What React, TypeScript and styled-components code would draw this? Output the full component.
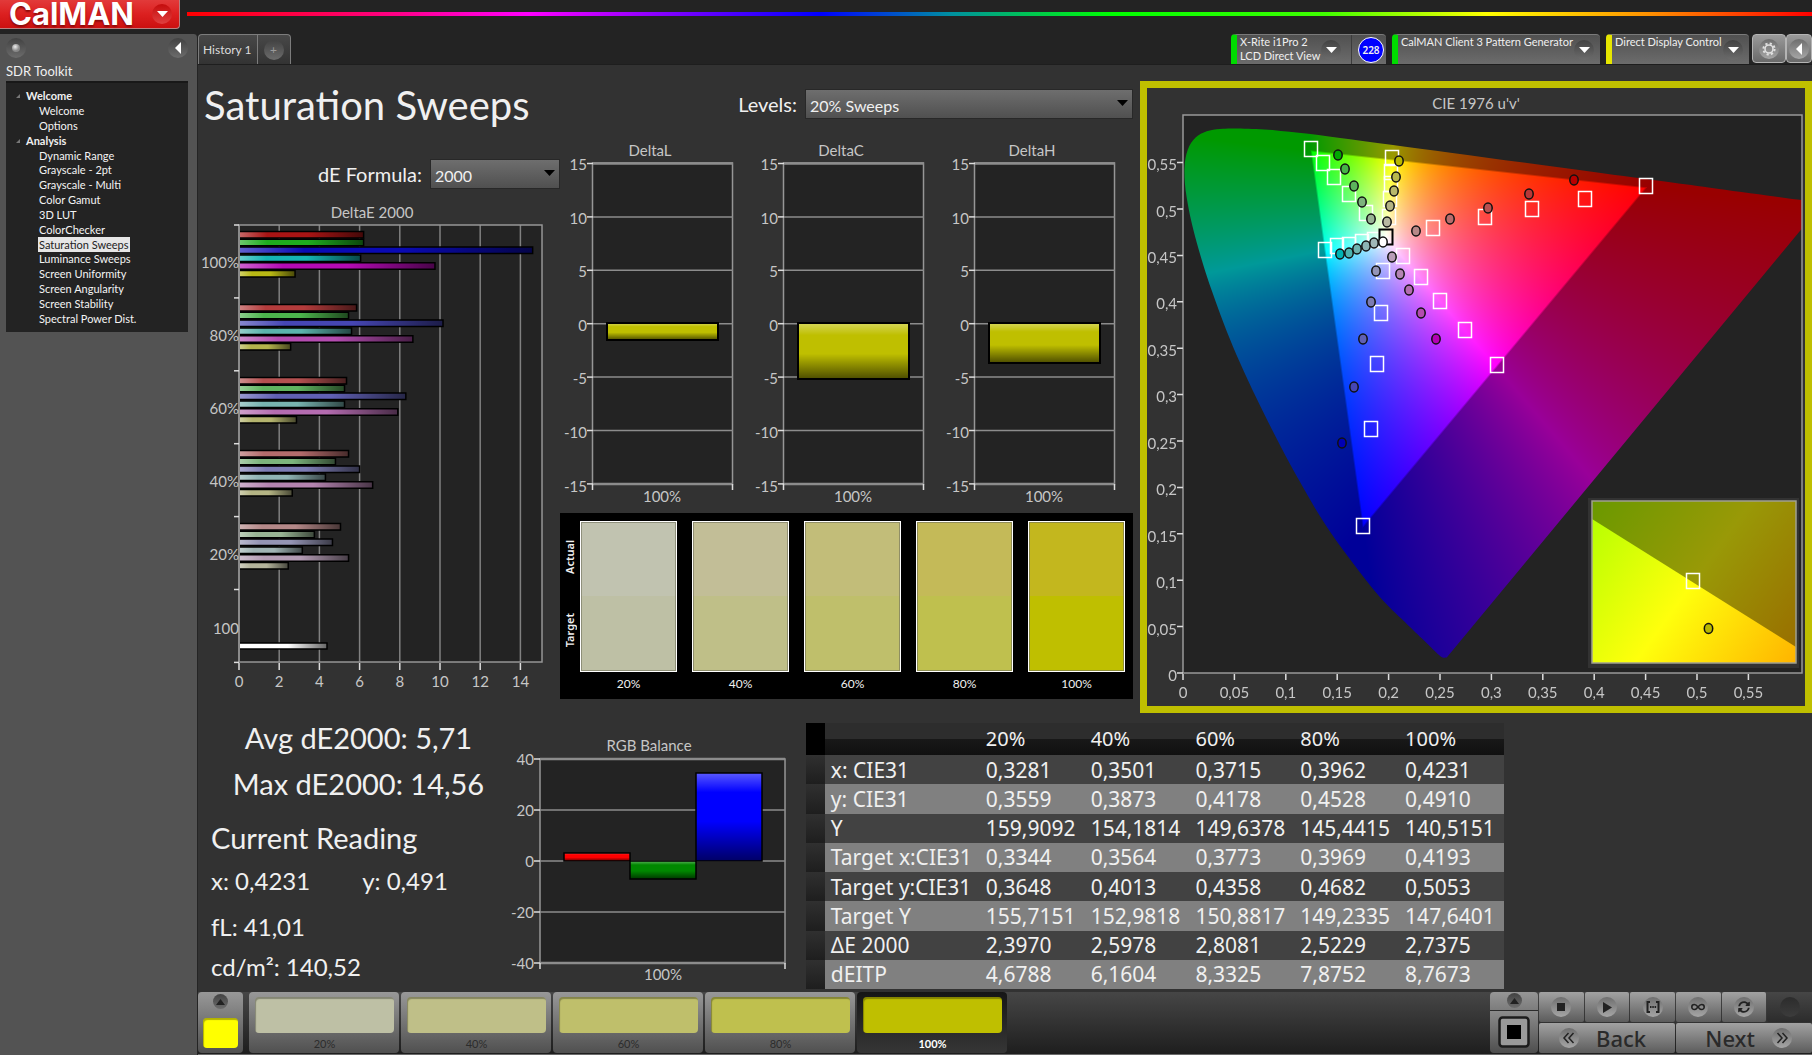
import React, { useEffect, useRef } from 'react';
import styled, { createGlobalStyle, css } from 'styled-components';
import { FaSyncAlt } from 'react-icons/fa';

const sans = `Lato, "Open Sans", "Liberation Sans", sans-serif`;
const wide = `"Noto Sans", "Open Sans", "Liberation Sans", sans-serif`;

const GlobalStyle = createGlobalStyle`
  *, *::before, *::after { box-sizing: border-box; }
  body { margin: 0; background: #232323; color: #f0f0f0; font-family: ${sans}; }
  button, select { font: inherit; color: inherit; border: 0; padding: 0; }
  button { cursor: pointer; }
  ul { list-style: none; margin: 0; padding: 0; }
  h1, h2, p { margin: 0; font-weight: 400; }
  svg { display: block; }
`;

/* ---------- shell ---------- */

const Page = styled.div`
  display: flex;
  flex-direction: column;
  min-height: 100vh;
`;

const TopBar = styled.header`
  display: flex;
  align-items: flex-start;
  gap: 7px;
  height: 34px;
`;

const LogoButton = styled.button`
  display: flex;
  align-items: center;
  justify-content: space-between;
  width: 180px;
  height: 29px;
  padding: 0 7px 0 9px;
  background: linear-gradient(#e23a3a, #dc2020 50%, #cc1010);
  border-right: 1px solid #b98080;
  border-bottom: 1px solid #b98080;
  border-radius: 0 0 4px 0;
  color: #fff;
`;

const LogoText = styled.span`
  font: 700 31px/28px Inter, ${wide};
  text-shadow: 0 2px 2px #8c0a0a;
`;

const Rainbow = styled.div`
  flex: 1;
  height: 4px;
  margin-top: 12px;
  background: linear-gradient(90deg, #ff0000 0%, #ff0088 13%, #ff00ff 21%, #8800ff 29%, #0000ff 39%, #0090a0 47%, #00ff00 57%, #40ff00 70%, #ffff00 80%, #ff9000 90%, #ff0000 100%);
`;

const Body = styled.div`
  display: flex;
  flex: 1;
`;

const Sidebar = styled.aside`
  flex: 0 0 198px;
  padding: 0 9px 0 6px;
  background: #535353;
  border-right: 1px solid #242424;
  border-radius: 0 4px 0 0;
`;

const SidebarHead = styled.div`
  display: flex;
  justify-content: space-between;
  align-items: center;
  height: 28px;
`;

const RoundIcon = styled.span<{ $size?: number; $light?: boolean }>`
  display: inline-flex;
  flex: none;
  align-items: center;
  justify-content: center;
  width: ${(p) => p.$size ?? 20}px;
  height: ${(p) => p.$size ?? 20}px;
  border-radius: 50%;
  background: ${(p) => (p.$light ? 'linear-gradient(#6e6e6e, #a6a6a6)' : 'linear-gradient(#424242, #6c6c6c)')};
`;

const RoundButton = styled(RoundIcon).attrs({ as: 'button' })``;

const LogoCaret = styled(RoundIcon)`
  background: linear-gradient(#c40c0c, #e04040);
`;

const WorkflowName = styled.h2`
  font-size: 13px;
  line-height: 19px;
`;

const TreePanel = styled.nav`
  height: 251px;
  padding: 6px 0 6px 9px;
  background: #232323;
  border-top: 2px solid #181818;
  font-size: 11px;
  line-height: 14px;
`;

const Tree = styled.ul`
  display: grid;
  grid-auto-rows: minmax(0, 1fr);
  height: 100%;
`;

const TreeItem = styled.li<{ $group?: boolean }>`
  display: flex;
  align-items: center;
  gap: 6px;
  padding-left: ${(p) => (p.$group ? 1 : 23)}px;
  font-weight: ${(p) => (p.$group ? 700 : 400)};
`;

const TreeButton = styled.button<{ $active?: boolean }>`
  height: 15px;
  padding: 0 1px;
  background: ${(p) => (p.$active ? '#e6e6e6' : 'none')};
  color: ${(p) => (p.$active ? '#222' : '#f4f4f4')};
`;

const Main = styled.main`
  display: flex;
  flex: 1;
  min-width: 0;
  flex-direction: column;
`;

/* ---------- tab strip ---------- */

const Strip = styled.div`
  display: flex;
  justify-content: space-between;
  height: 30px;
`;

const Tabs = styled.div`
  display: flex;
  border: 1px solid #7c7c7c;
  border-bottom: 0;
  border-radius: 4px 4px 0 0;
  background: linear-gradient(#484848, #333);
`;

const Tab = styled.button`
  padding: 0 5px 0 4px;
  background: none;
  font-size: 12px;
  color: #dcdcdc;

  & + & {
    padding: 0 6px;
    border-left: 1px solid #7c7c7c;
    color: #9a9a9a;
  }
`;

const Devices = styled.div`
  display: flex;
  gap: 6px;
`;

const Device = styled.div<{ $color: string; $width: number }>`
  display: flex;
  width: ${(p) => p.$width}px;
  padding-left: 3px;
  background: linear-gradient(#505050, #6c6c6c);
  border-top: 1px solid #7a7a7a;
  border-left: 6px solid ${(p) => p.$color};
  border-radius: 4px 4px 0 0;
`;

const DeviceButton = styled.button<{ $end?: number }>`
  display: flex;
  flex: 1;
  align-items: flex-start;
  justify-content: space-between;
  padding-right: ${(p) => p.$end ?? 6}px;
  background: none;
  font-size: 11px;
  line-height: 14px;
  text-align: left;
  white-space: nowrap;
`;

const DeviceCaret = styled(RoundIcon)`
  margin-top: 5px;
`;

const Badge = styled.span`
  align-self: center;
  width: 26px;
  height: 26px;
  margin: 0 2px 0 6px;
  border: 1px solid #fff;
  border-radius: 50%;
  background: #0000ff;
  font: 600 10px/24px ${wide};
  text-align: center;
`;

const BadgeSlot = styled.span`
  display: flex;
  border-left: 1px solid #3c3c3c;
`;

const ToolButtons = styled.div`
  display: flex;
  height: 29px;
  margin-left: -3px;
`;

const ToolButton = styled.button<{ $width: number }>`
  display: flex;
  align-items: center;
  justify-content: center;
  width: ${(p) => p.$width}px;
  background: linear-gradient(#9a9a9a, #6a6a6a);
  border: 1px solid #b4b4b4;
  border-radius: 4px;
`;

/* ---------- dashboard ---------- */

const Dashboard = styled.div`
  flex: 1;
  background: #323232;
  border-top: 1px solid #1e1e1e;
`;

const Upper = styled.div`
  display: grid;
  grid-template-columns: 362fr 580fr 672fr;
  align-items: start;
  padding-top: 16px;
`;

const LeftColumn = styled.section`
  display: flex;
  flex-direction: column;
`;

const MiddleColumn = styled.section`
  padding-right: 7px;
`;

const Title = styled.h1`
  padding-left: 6px;
  font-size: 40px;
  line-height: 48px;
`;

const Field = styled.div<{ $top: number; $bottom: number }>`
  display: flex;
  align-items: center;
  justify-content: flex-end;
  gap: 8px;
  margin: ${(p) => `${p.$top}px 0 ${p.$bottom}px`};
  font-size: 20px;
`;

const SelectBox = styled.div<{ $width: number }>`
  position: relative;
  width: ${(p) => p.$width}px;
  height: 30px;

  select {
    width: 100%;
    height: 100%;
    padding: 3px 24px 0 4px;
    appearance: none;
    background: linear-gradient(#6e6e6e, #505050);
    border: 1px solid #282828;
    font-size: 16px;
  }

  svg {
    position: absolute;
    top: 11px;
    right: 5px;
    pointer-events: none;
  }
`;

const Chart = styled.svg`
  width: 100%;
  height: auto;
  overflow: visible;

  text {
    font-family: ${sans};
    font-size: 15px;
    fill: #c6c6c6;
  }
`;

const DeltaRow = styled.div`
  display: grid;
  grid-template-columns: repeat(3, 1fr);
`;

const Swatches = styled.div`
  display: flex;
  padding: 8px 8px 3px 0;
  background: #000;
`;

const SwatchAxis = styled.div`
  display: flex;
  flex-direction: column;
  justify-content: space-around;
  align-items: center;
  width: 20px;
  height: 145px;

  span {
    writing-mode: vertical-rl;
    transform: rotate(180deg);
    font: 600 11px/14px ${wide};
  }
`;

const SwatchList = styled.div`
  display: grid;
  flex: 1;
  grid-template-columns: repeat(5, 1fr);
  column-gap: 15px;
`;

const Swatch = styled.figure`
  margin: 0;
  text-align: center;

  figcaption {
    font-size: 12px;
    line-height: 24px;
  }
`;

const SwatchColor = styled.div<{ $actual: string; $target: string }>`
  height: 151px;
  border: 1px solid #fff;
  box-shadow: inset 0 0 0 1px rgba(110, 110, 90, 0.6);
  background: linear-gradient(${(p) => p.$actual} 50%, ${(p) => p.$target} 50%);
`;

const CiePanel = styled.section`
  border: 7px solid #bfbf00;

  canvas {
    display: block;
    width: 100%;
    height: 100%;
  }
`;

const Lower = styled.div`
  display: grid;
  grid-template-columns: 308fr 300fr 698fr 308fr;
  align-items: start;
  margin-top: 2px;
`;

const Readings = styled.section`
  padding-left: 13px;
`;

const BigLine = styled.p<{ $center?: boolean }>`
  font-size: 29px;
  line-height: 46px;
  text-align: ${(p) => (p.$center ? 'center' : 'left')};
  margin-top: ${(p) => (p.$center ? 0 : 8)}px;
`;

const ReadingLine = styled.p<{ $gap?: boolean }>`
  display: flex;
  gap: 52px;
  margin-top: ${(p) => (p.$gap ? 6 : 0)}px;
  font-size: 24px;
  line-height: 40px;
`;

const ChartCell = styled.section`
  margin-top: 15px;
  padding-right: 5px;
`;

const DataTable = styled.table`
  width: 100%;
  height: 266px;
  margin-top: 8px;
  border-collapse: collapse;
  table-layout: fixed;
  font: 400 21px/24px ${wide};

  th, td {
    padding: 0 0 0 6px;
    font-weight: 400;
    text-align: left;
    white-space: nowrap;
  }
  thead th {
    height: 32px;
    font-size: 20px;
    background: linear-gradient(#2d2d2d 50%, #181818 50%, #101010);
  }
  thead th:first-child { background: #000; }
  tbody tr { background: #424242; }
  tbody tr:nth-child(even) { background: #808080; }
  tbody td:first-child { background: linear-gradient(#303030, #1e1e1e); }
`;

/* ---------- bottom bar ---------- */

const BottomBar = styled.footer`
  display: flex;
  justify-content: space-between;
  height: 63px;
  padding: 0 0 1px;
  background: linear-gradient(#464646, #1e1e1e);
  border-bottom: 1px solid #6a6a6a;
`;

const PatternGroup = styled.div`
  display: flex;
  gap: 2px;
`;

const PatternButton = styled.button<{ $active?: boolean }>`
  display: flex;
  flex-direction: column;
  justify-content: space-between;
  width: 150px;
  padding: 5px 5px 2px 6px;
  border-radius: 4px;
  font-size: 11px;
  line-height: 14px;
  text-align: center;
  ${(p) =>
    p.$active
      ? css`background: linear-gradient(#161616, #363636); color: #fff; font-weight: 700;`
      : css`background: linear-gradient(#989898, #505050); color: #2c2c2c;`}
`;

const PatternColor = styled.span<{ $color: string; $height: number }>`
  display: block;
  width: 100%;
  height: ${(p) => p.$height}px;
  border-radius: 4px;
  background: ${(p) => p.$color};
  box-shadow: inset 1px 2px 1px rgba(0, 0, 0, 0.3);
`;

const PatternLabel = styled.span`
  width: 100%;
`;

const CurrentPattern = styled.button`
  display: flex;
  flex-direction: column;
  align-items: center;
  justify-content: space-between;
  width: 45px;
  margin-right: 4px;
  padding: 2px 5px 5px;
  background: linear-gradient(#989898, #505050);
  border-radius: 4px;
`;

const Transport = styled.div`
  display: flex;
  gap: 1px;
`;

const WindowButton = styled.button`
  display: flex;
  flex-direction: column;
  align-items: center;
  justify-content: space-between;
  width: 48px;
  padding: 1px 0 5px;
  border-radius: 4px;
  background: linear-gradient(#969696, #7c7c7c 18px, #2c2c2c 18px, #2c2c2c 19px, #8c8c8c 19px, #4e4e4e);
`;

const TransportGrid = styled.div`
  display: grid;
  width: 273px;
  grid-template-columns: repeat(6, 1fr);
  grid-template-rows: 30px 30px;
  gap: 1px;
`;

const TransportButton = styled.button<{ $off?: boolean }>`
  display: flex;
  align-items: center;
  justify-content: center;
  border-radius: 2px;
  background: ${(p) => (p.$off ? 'linear-gradient(#464646, #2c2c2c)' : 'linear-gradient(#a2a2a2, #5c5c5c)')};
  color: #222;
`;

const StepButton = styled(TransportButton)<{ $side: 'start' | 'end' }>`
  grid-column: span 3;
  gap: 17px;
  justify-content: flex-${(p) => p.$side};
  padding: 0 20px;
  color: #2a2a2a;
  font: 500 22px/28px ${wide};
`;

const DimIcon = styled(RoundIcon)`
  background: linear-gradient(#2c2c2c, #3c3c3c);
`;

/* ---------- small glyphs ---------- */

const Caret = ({ color = '#fff' }: { color?: string }) => (
  <svg width="11" height="6" viewBox="0 0 11 6"><path d="M0 0h11L5.5 6z" fill={color} /></svg>
);
const CaretLeft = () => (
  <svg width="6" height="12" viewBox="0 0 6 12"><path d="M6 0v12L0 6z" fill="#fff" /></svg>
);
const CaretUp = () => (
  <svg width="9" height="6" viewBox="0 0 9 6"><path d="M0 6h9L4.5 0z" fill="#222" /></svg>
);

/* ---------- CIE diagram ---------- */

type Pt = [number, number];

const locusXy: Pt[] = [
  [0.1741, 0.005], [0.1714, 0.0051], [0.1689, 0.0069], [0.1644, 0.0109], [0.1566, 0.0177],
  [0.144, 0.0297], [0.1241, 0.0578], [0.1096, 0.0868], [0.0913, 0.1327], [0.0687, 0.2007],
  [0.0454, 0.295], [0.0235, 0.4127], [0.0082, 0.5384], [0.0039, 0.6548], [0.0139, 0.7502],
  [0.0389, 0.812], [0.0743, 0.8338], [0.1142, 0.8262], [0.1547, 0.8059], [0.2296, 0.7543],
  [0.3016, 0.6923], [0.3731, 0.6245], [0.4441, 0.5547], [0.5125, 0.4866], [0.5752, 0.4242],
  [0.627, 0.3725], [0.6658, 0.334], [0.6915, 0.3083], [0.719, 0.2809], [0.7347, 0.2653],
];
const toUv = ([x, y]: Pt): Pt => {
  const d = -2 * x + 12 * y + 3;
  return [(4 * x) / d, (9 * y) / d];
};
const gamut: Pt[] = [[0.4507, 0.5229], [0.125, 0.5625], [0.1754, 0.1579]];

const plot = { su: 1027, sv: 928, w: 619, h: 558 };

function paintGamut(canvas: HTMLCanvasElement) {
  const { su, sv, w, h } = plot;
  const ctx = canvas.getContext('2d');
  if (!ctx) return;
  const img = ctx.createImageData(w, h);
  const px = ([u, v]: Pt): Pt => [u * su, h - v * sv];
  const tri = gamut.map(px);
  const tone = (c: number) => Math.pow(Math.max(0, c), 0.88);
  for (let j = 0; j < h; j++) {
    for (let i = 0; i < w; i++) {
      const u = (i + 0.5) / su;
      const v = (h - j - 0.5) / sv;
      const X = (9 * u) / (4 * v);
      const Z = (12 - 3 * u - 20 * v) / (4 * v);
      const r = tone(3.2406 * X - 1.5372 - 0.4986 * Z);
      const g = tone(-0.9689 * X + 1.8758 + 0.0415 * Z);
      const b = tone(0.0557 * X - 0.204 + 1.057 * Z);
      const m = Math.max(r, g, b, 1e-6);
      let dist = Infinity;
      for (let k = 0; k < 3; k++) {
        const [ax, ay] = tri[k];
        const [bx, by] = tri[(k + 1) % 3];
        const len = Math.hypot(bx - ax, by - ay);
        const d = ((i + 0.5 - ax) * (by - ay) - (j + 0.5 - ay) * (bx - ax)) / len;
        dist = Math.min(dist, d);
      }
      // full brightness inside the target gamut, dimmed outside it
      const k = 0.6 + 0.4 * Math.min(1, Math.max(0, dist / 2 + 0.5));
      const o = (j * w + i) * 4;
      img.data[o] = (r / m) * 255 * k;
      img.data[o + 1] = (g / m) * 255 * k;
      img.data[o + 2] = (b / m) * 255 * k;
      img.data[o + 3] = 255;
    }
  }
  ctx.putImageData(img, 0, 0);
  // keep only the area under the spectral locus
  const pts = locusXy.map((p) => px(toUv(p)));
  ctx.globalCompositeOperation = 'destination-in';
  ctx.beginPath();
  ctx.moveTo(pts[0][0], pts[0][1]);
  for (let i = 0; i < pts.length - 1; i++) {
    const a = pts[Math.max(0, i - 1)], b = pts[i], c = pts[i + 1], d = pts[Math.min(pts.length - 1, i + 2)];
    ctx.bezierCurveTo(b[0] + (c[0] - a[0]) / 6, b[1] + (c[1] - a[1]) / 6, c[0] - (d[0] - b[0]) / 6, c[1] - (d[1] - b[1]) / 6, c[0], c[1]);
  }
  ctx.closePath();
  ctx.fill();
  ctx.globalCompositeOperation = 'source-over';
}

const GamutCanvas = () => {
  const ref = useRef<HTMLCanvasElement>(null);
  useEffect(() => {
    if (ref.current) paintGamut(ref.current);
  }, []);
  return <canvas ref={ref} width={plot.w} height={plot.h} />;
};

const targets: Pt[] = [
  [128, 34], [140, 48], [151, 62], [166, 79], [183, 98],
  [209, 43], [208, 57], [208, 69], [207, 84], [206, 102],
  [142, 135], [154, 131], [166, 130], [179, 127], [191, 125],
  [250, 113], [302, 102], [349, 94], [402, 84], [463, 71],
  [220, 141], [238, 162], [257, 186], [282, 215], [314, 250],
  [200, 156], [198, 198], [194, 249], [188, 314], [180, 411],
];
const measured: [number, number, string][] = [
  [155, 40, '#00a800'], [162, 54, '#46b446'], [171, 71, '#5cb45c'], [179, 87, '#7cb47c'], [188, 104, '#98b494'],
  [216, 46, '#b8b800'], [213, 62, '#b8b84c'], [211, 76, '#b8b86c'], [207, 91, '#b4b484'], [204, 107, '#b8b8a0'],
  [157, 139, '#00b4b4'], [166, 138, '#4cb4b0'], [174, 134, '#70b4b0'], [183, 131, '#8cb4b4'], [191, 128, '#a0b8b8'],
  [200, 127, '#ffffff'],
  [233, 116, '#b88888'], [267, 104, '#b86c6c'], [305, 93, '#b85050'], [346, 79, '#b83838'], [391, 65, '#b80000'],
  [209, 142, '#b89cb8'], [217, 159, '#b484b4'], [226, 175, '#b46cb0'], [238, 198, '#b44cb0'], [253, 224, '#b400b4'],
  [193, 156, '#9494b8'], [188, 187, '#7c7cb4'], [180, 224, '#6060b4'], [171, 272, '#4646b4'], [159, 328, '#0000b4'],
];

const decimal = (n: number) => String(n).replace('.', ',');

const CieChart = () => {
  const ticks = Array.from({ length: 12 }, (_, i) => Math.round(i * 5) / 100);
  return (
    <CiePanel>
      <Chart viewBox="0 0 658 618" role="img" aria-label="CIE 1976 u'v'">
        <defs>
          <linearGradient id="inset" gradientUnits="userSpaceOnUse" x1="0" y1="0" x2="210" y2="152">
            <stop offset="0" stopColor="#b1ff00" />
            <stop offset="0.5" stopColor="#ffff0c" />
            <stop offset="1" stopColor="#ffb400" />
          </linearGradient>
        </defs>
        <text x="329" y="21" textAnchor="middle">CIE 1976 u'v'</text>
        <rect x="36" y="27" width="619" height="558" fill="#232323" />
        <foreignObject x="36" y="27" width="619" height="558"><GamutCanvas /></foreignObject>
        <rect x="36" y="27" width="619" height="558" fill="none" stroke="#999" strokeWidth="1.5" />
        {ticks.map((t) => (
          <g key={t}>
            <path d={`M${36 + t * 1028} 586v6M30 ${585 - t * 928}h6`} stroke="#ddd" strokeWidth="1.5" />
            <text x={36 + t * 1028} y="610" textAnchor="middle">{decimal(t)}</text>
            <text x="30" y={593 - t * 929} textAnchor="end">{decimal(t)}</text>
          </g>
        ))}
        <g transform="translate(36 27)" fill="none" strokeWidth="1.5">
          {targets.map(([x, y], i) => <rect key={i} x={x - 6.5} y={y - 7.5} width="13" height="15" stroke="#fff" />)}
          <rect x="196.5" y="114.5" width="13" height="15" stroke="#000" strokeWidth="2" />
          {measured.map(([x, y, c], i) => <ellipse key={i} cx={x} cy={y} rx="4.2" ry="5" fill={c} stroke="#111" />)}
        </g>
        <rect x="441" y="410" width="211" height="170" fill="#323232" />
        <g transform="translate(445 413)">
          <rect width="204" height="162" fill="url(#inset)" />
          <path d="M0 0h204v146L0 18z" fill="#000" fillOpacity="0.4" />
          <rect width="204" height="162" fill="none" stroke="#a0a090" strokeWidth="1.5" />
          <rect x="94.5" y="72.500" width="13" height="15" fill="none" stroke="#fff" strokeWidth="1.5" />
          <ellipse cx="116.5" cy="127.5" rx="4.2" ry="5" fill="#b8b800" stroke="#111" strokeWidth="1.5" />
        </g>
      </Chart>
    </CiePanel>
  );
};

/* ---------- bar charts ---------- */

const Sheen = ({ id, vertical }: { id: string; vertical?: boolean }) => (
  <linearGradient id={id} x1="0" y1="0" x2={vertical ? 0 : 1} y2={vertical ? 1 : 0}>
    <stop offset="0" stopColor="#fff" stopOpacity="0.35" />
    <stop offset="0.22" stopColor="#fff" stopOpacity="0" />
    <stop offset="0.55" stopColor="#000" stopOpacity="0" />
    <stop offset="1" stopColor="#000" stopOpacity="0.6" />
  </linearGradient>
);

const deGroups = [
  { label: '100%', values: [6.15, 6.15, 14.56, 6.0, 9.7, 2.74], colors: ['#a81414', '#1eac1e', '#0a0ab4', '#14b4b4', '#b40ab4', '#b8b814'] },
  { label: '80%', values: [5.8, 5.4, 10.1, 5.55, 8.6, 2.52], colors: ['#b43c3c', '#4cb44c', '#4646b4', '#5ab4ac', '#b44cb0', '#b4b44c'] },
  { label: '60%', values: [5.3, 5.2, 8.25, 5.2, 7.85, 2.81], colors: ['#b45050', '#60b460', '#6060b4', '#78b4b0', '#b46cb0', '#b4b46e'] },
  { label: '40%', values: [5.4, 4.75, 5.95, 4.25, 6.6, 2.6], colors: ['#b46c6c', '#7cb47c', '#7c7cb4', '#90b4b4', '#b484b0', '#b4b484'] },
  { label: '20%', values: [5.0, 3.7, 4.6, 3.1, 5.4, 2.4], colors: ['#b48888', '#98b494', '#9494b4', '#a0b4b4', '#b49cb4', '#b4b49c'] },
];

const DeltaEChart = () => (
  <Chart viewBox="0 0 362 500" role="img" aria-label="DeltaE 2000">
    <defs><Sheen id="sheen-h" /></defs>
    <text x="174" y="18" textAnchor="middle">DeltaE 2000</text>
    <rect x="41" y="25" width="303" height="437" fill="#232323" />
    {[0, 2, 4, 6, 8, 10, 12, 14].map((n) => (
      <g key={n}>
        <path d={`M${41 + n * 20.1} 25v437`} stroke="#808080" strokeWidth="1.5" />
        <path d={`M${41 + n * 20.1} 463v7`} stroke="#ddd" strokeWidth="1.5" />
        <text x={41 + n * 20.1} y="487" textAnchor="middle">{n}</text>
      </g>
    ))}
    <rect x="41" y="25" width="303" height="437" fill="none" stroke="#969696" strokeWidth="1.5" />
    {[0, 1, 2, 3, 4, 5, 6].map((n) => (
      <path key={n} d={`M36 ${25 + n * 72.9}h5`} stroke="#ddd" strokeWidth="1.5" />
    ))}
    {deGroups.map((g, gi) => (
      <g key={g.label}>
        <text x="41" y={68 + gi * 73} textAnchor="end">{g.label}</text>
        {g.values.map((v, i) => {
          const box = { x: 42, y: 31.5 + gi * 73 + i * 7.8, width: v * 20.1, height: 6.5 };
          return (
            <g key={i}>
              <rect {...box} fill={g.colors[i]} />
              <rect {...box} fill="url(#sheen-h)" />
              <path d={`M42 ${box.y}h${box.width}v${box.height}H42`} fill="none" stroke="#000" strokeWidth="1.5" />
            </g>
          );
        })}
      </g>
    ))}
    <text x="41" y="434" textAnchor="end">100</text>
    <rect x="42" y="443" width="87" height="6" fill="#fff" />
    <rect x="42" y="443" width="87" height="6" fill="url(#sheen-h)" />
    <path d="M42 443h87v6H42" fill="none" stroke="#000" strokeWidth="1.5" />
  </Chart>
);

const DeltaChart = ({ name, value }: { name: string; value: number }) => {
  const id = `sheen-${name}`;
  const zero = 183;
  return (
    <Chart viewBox="0 0 191 373" role="img" aria-label={name}>
      <defs><Sheen id={id} vertical /></defs>
      <text x="90" y="16" textAnchor="middle">{name}</text>
      <rect x="32.5" y="23" width="140" height="321" fill="#232323" stroke="#969696" strokeWidth="1.5" />
      {[15, 10, 5, 0, -5, -10, -15].map((n, i) => (
        <g key={n}>
          <path d={`M32 ${23.5 + i * 53.4}h141`} stroke="#8c8c8c" strokeWidth={i % 6 ? 1.5 : 2.5} />
          <path d={`M27 ${23.5 + i * 53.4}h6`} stroke="#ddd" strokeWidth="1.5" />
          <text x="27" y={30 + i * 53.6} textAnchor="end">{n}</text>
        </g>
      ))}
      <path d="M32.5 344v6M172.5 344v6" stroke="#ddd" strokeWidth="1.5" />
      <rect x="47" y={zero} width="111" height={value} fill="#bfbf00" />
      <rect x="47" y={zero} width="111" height={value} fill={`url(#${id})`} stroke="#000" strokeWidth="2" />
      <text x="102" y="362" textAnchor="middle">100%</text>
    </Chart>
  );
};

const RgbChart = () => (
  <Chart viewBox="0 0 295 260" role="img" aria-label="RGB Balance">
    <defs><Sheen id="sheen-rgb" vertical /></defs>
    <text x="143" y="21" textAnchor="middle">RGB Balance</text>
    <rect x="34" y="29" width="245" height="204" fill="#232323" stroke="#969696" strokeWidth="1.5" />
    {[40, 20, 0, -20, -40].map((n, i) => (
      <g key={n}>
        <path d={`M34 ${29 + i * 51}h245`} stroke="#8c8c8c" strokeWidth={i % 4 ? 1.5 : 2.5} />
        <path d={`M28 ${29 + i * 51}h6`} stroke="#ddd" strokeWidth="1.5" />
        <text x="28" y={35 + i * 51} textAnchor="end">{n}</text>
      </g>
    ))}
    <path d="M34 233v6M279 233v6" stroke="#ddd" strokeWidth="1.5" />
    {[
      { x: 58, y: 123, h: 8, c: '#ff0000' },
      { x: 124, y: 131, h: 18, c: '#008800' },
      { x: 190, y: 43, h: 88, c: '#0000ff' },
    ].map((b) => (
      <g key={b.c}>
        <rect x={b.x} y={b.y} width="66" height={b.h} fill={b.c} />
        <rect x={b.x} y={b.y} width="66" height={b.h} fill="url(#sheen-rgb)" stroke="#000" strokeWidth="1.5" />
      </g>
    ))}
    <text x="157" y="250" textAnchor="middle">100%</text>
  </Chart>
);

/* ---------- data ---------- */

const tree: { name: string; items: string[] }[] = [
  { name: 'Welcome', items: ['Welcome', 'Options'] },
  {
    name: 'Analysis',
    items: ['Dynamic Range', 'Grayscale - 2pt', 'Grayscale - Multi', 'Color Gamut', '3D LUT', 'ColorChecker',
      'Saturation Sweeps', 'Luminance Sweeps', 'Screen Uniformity', 'Screen Angularity', 'Screen Stability', 'Spectral Power Dist.'],
  },
];

const levels = [
  { label: '20%', actual: '#c1c3b0', target: '#bec0a5' },
  { label: '40%', actual: '#c2be97', target: '#bfbf88' },
  { label: '60%', actual: '#c2bd79', target: '#bfbf6b' },
  { label: '80%', actual: '#c4ba58', target: '#bfc04e' },
  { label: '100%', actual: '#c3b71e', target: '#bfbf00' },
];

const rows: string[][] = [
  ['x: CIE31', '0,3281', '0,3501', '0,3715', '0,3962', '0,4231'],
  ['y: CIE31', '0,3559', '0,3873', '0,4178', '0,4528', '0,4910'],
  ['Y', '159,9092', '154,1814', '149,6378', '145,4415', '140,5151'],
  ['Target x:CIE31', '0,3344', '0,3564', '0,3773', '0,3969', '0,4193'],
  ['Target y:CIE31', '0,3648', '0,4013', '0,4358', '0,4682', '0,5053'],
  ['Target Y', '155,7151', '152,9818', '150,8817', '149,2335', '147,6401'],
  ['ΔE 2000', '2,3970', '2,5978', '2,8081', '2,5229', '2,7375'],
  ['dEITP', '4,6788', '6,1604', '8,3325', '7,8752', '8,7673'],
];

const Glyph = ({ children }: { children: React.ReactNode }) => (
  <svg width="16" height="16" viewBox="0 0 16 16">{children}</svg>
);

const transportIcons: { name: string; icon: React.ReactNode }[] = [
  { name: 'Stop', icon: <Glyph><rect x="4" y="4" width="8" height="8" fill="#222" /></Glyph> },
  { name: 'Play', icon: <Glyph><path d="M4 3l9 5.5L4 14z" fill="#222" /></Glyph> },
  {
    name: 'Read range',
    icon: <Glyph><path d="M5 3H2.5v10H5M11 3h2.5v10H11M5 8h1.5M7.3 8h1.5M9.6 8h1.5" fill="none" stroke="#222" strokeWidth="2" /></Glyph>,
  },
  {
    name: 'Continuous',
    icon: (
      <Glyph>
        <path d="M8 8C6.5 6 5.5 5.5 4.3 5.5a2.5 2.5 0 0 0 0 5C5.5 10.5 6.5 10 8 8s2.5-2.5 3.7-2.5a2.5 2.5 0 0 1 0 5C10.5 10.5 9.5 10 8 8z" fill="none" stroke="#222" strokeWidth="1.6" />
      </Glyph>
    ),
  },
  { name: 'Refresh', icon: <FaSyncAlt size={12} /> },
];

/* ---------- app ---------- */

export default function App() {
  return (
    <Page>
      <GlobalStyle />
      <TopBar>
        <LogoButton>
          <LogoText>CalMAN</LogoText>
          <LogoCaret><Caret /></LogoCaret>
        </LogoButton>
        <Rainbow />
      </TopBar>
      <Body>
        <Sidebar>
          <SidebarHead>
            <RoundButton aria-label="Workflow status">
              <svg width="10" height="10" viewBox="0 0 10 10">
                <defs><radialGradient id="bead" cx=".4" cy=".35"><stop offset="0" stopColor="#eee" /><stop offset="1" stopColor="#888" /></radialGradient></defs>
                <circle cx="5" cy="5" r="4" fill="url(#bead)" />
              </svg>
            </RoundButton>
            <RoundButton aria-label="Collapse sidebar"><CaretLeft /></RoundButton>
          </SidebarHead>
          <WorkflowName>SDR Toolkit</WorkflowName>
          <TreePanel>
            <Tree>
              {tree.map((g) => (
                <React.Fragment key={g.name}>
                  <TreeItem $group>
                    <svg width="4" height="4" viewBox="0 0 4 4"><path d="M4 0v4H0z" fill="#777" /></svg>
                    {g.name}
                  </TreeItem>
                  {g.items.map((t) => (
                    <TreeItem key={t}><TreeButton $active={t === 'Saturation Sweeps'}>{t}</TreeButton></TreeItem>
                  ))}
                </React.Fragment>
              ))}
            </Tree>
          </TreePanel>
        </Sidebar>
        <Main>
          <Strip>
            <Tabs>
              <Tab>History 1</Tab>
              <Tab aria-label="New history tab"><RoundIcon>+</RoundIcon></Tab>
            </Tabs>
            <Devices>
              <Device $color="#00dc00" $width={155}>
                <DeviceButton $end={10}>
                  <span>X-Rite i1Pro 2<br />LCD Direct View</span>
                  <DeviceCaret><Caret /></DeviceCaret>
                </DeviceButton>
                <BadgeSlot><Badge>228</Badge></BadgeSlot>
              </Device>
              <Device $color="#00dc00" $width={208}>
                <DeviceButton>
                  <span>CalMAN Client 3 Pattern Generator</span>
                  <DeviceCaret><Caret /></DeviceCaret>
                </DeviceButton>
              </Device>
              <Device $color="#e6e600" $width={143}>
                <DeviceButton>
                  <span>Direct Display Control</span>
                  <DeviceCaret><Caret /></DeviceCaret>
                </DeviceButton>
              </Device>
              <ToolButtons>
                <ToolButton $width={34} aria-label="Settings">
                  <RoundIcon $light>
                    <svg width="14" height="14" viewBox="0 0 14 14" fill="none" stroke="#e0e0e0">
                      <circle cx="7" cy="7" r="4" strokeWidth="1.6" />
                      <circle cx="7" cy="7" r="5.6" strokeWidth="2" strokeDasharray="2.2 2.198" />
                    </svg>
                  </RoundIcon>
                </ToolButton>
                <ToolButton $width={26} aria-label="Collapse devices"><RoundIcon $light><CaretLeft /></RoundIcon></ToolButton>
              </ToolButtons>
            </Devices>
          </Strip>

          <Dashboard>
            <Upper>
              <LeftColumn>
                <Title>Saturation Sweeps</Title>
                <Field $top={30} $bottom={11}>
                  <label htmlFor="formula">dE Formula:</label>
                  <SelectBox $width={130}>
                    <select id="formula" defaultValue="2000"><option>2000</option></select>
                    <Caret color="#000" />
                  </SelectBox>
                </Field>
                <DeltaEChart />
              </LeftColumn>
              <MiddleColumn>
                <Field $top={8} $bottom={21}>
                  <label htmlFor="levels">Levels:</label>
                  <SelectBox $width={328}>
                    <select id="levels" defaultValue="20% Sweeps"><option>20% Sweeps</option></select>
                    <Caret color="#000" />
                  </SelectBox>
                </Field>
                <DeltaRow>
                  <DeltaChart name="DeltaL" value={17} />
                  <DeltaChart name="DeltaC" value={56} />
                  <DeltaChart name="DeltaH" value={40} />
                </DeltaRow>
                <Swatches>
                  <SwatchAxis><span>Actual</span><span>Target</span></SwatchAxis>
                  <SwatchList>
                    {levels.map((l) => (
                      <Swatch key={l.label}>
                        <SwatchColor $actual={l.actual} $target={l.target} />
                        <figcaption>{l.label}</figcaption>
                      </Swatch>
                    ))}
                  </SwatchList>
                </Swatches>
              </MiddleColumn>
              <CieChart />
            </Upper>
            <Lower>
              <Readings>
                <BigLine $center>Avg dE2000: 5,71</BigLine>
                <BigLine $center>Max dE2000: 14,56</BigLine>
                <BigLine>Current Reading</BigLine>
                <ReadingLine><span>x: 0,4231</span><span>y: 0,491</span></ReadingLine>
                <ReadingLine $gap>fL: 41,01</ReadingLine>
                <ReadingLine>cd/m²: 140,52</ReadingLine>
              </Readings>
              <ChartCell><RgbChart /></ChartCell>
              <DataTable>
                <colgroup>
                  <col style={{ width: '2.7%' }} />
                  <col style={{ width: '22.2%' }} />
                  <col /><col /><col /><col /><col />
                </colgroup>
                <thead>
                  <tr><th /><th />{levels.map((l) => <th key={l.label} scope="col">{l.label}</th>)}</tr>
                </thead>
                <tbody>
                  {rows.map(([name, ...cells]) => (
                    <tr key={name}>
                      <td />
                      <th scope="row">{name}</th>
                      {cells.map((c) => <td key={c}>{c}</td>)}
                    </tr>
                  ))}
                </tbody>
              </DataTable>
            </Lower>
          </Dashboard>

          <BottomBar>
            <PatternGroup>
              <CurrentPattern aria-label="Current pattern">
                <RoundIcon $size={15}><CaretUp /></RoundIcon>
                <PatternColor $color="#ffff00" $height={30} />
              </CurrentPattern>
              {levels.map((l) => (
                <PatternButton key={l.label} $active={l.label === '100%'}>
                  <PatternColor $color={l.target} $height={36} />
                  <PatternLabel>{l.label}</PatternLabel>
                </PatternButton>
              ))}
            </PatternGroup>
            <Transport>
              <WindowButton aria-label="Pattern window">
                <RoundIcon $size={15}><CaretUp /></RoundIcon>
                <svg width="32" height="32" viewBox="0 0 32 32">
                  <rect x="1.5" y="1.5" width="29" height="29" rx="3" fill="#9a9a9a" stroke="#1c1c1c" strokeWidth="2.5" />
                  <rect x="9" y="9" width="14" height="14" fill="#000" />
                </svg>
              </WindowButton>
              <TransportGrid>
                {transportIcons.map((t) => (
                  <TransportButton key={t.name} aria-label={t.name}>
                    <RoundIcon $light>{t.icon}</RoundIcon>
                  </TransportButton>
                ))}
                <TransportButton $off disabled aria-label="Record"><DimIcon /></TransportButton>
                <StepButton $side="start">
                  <RoundIcon $light>
                    <Glyph><path d="M7.5 3L3 8l4.5 5M12.5 3L8 8l4.5 5" fill="none" stroke="#222" strokeWidth="1.5" /></Glyph>
                  </RoundIcon>
                  Back
                </StepButton>
                <StepButton $side="end">
                  Next
                  <RoundIcon $light>
                    <Glyph><path d="M3.5 3L8 8l-4.5 5M8.5 3L13 8l-4.5 5" fill="none" stroke="#222" strokeWidth="1.5" /></Glyph>
                  </RoundIcon>
                </StepButton>
              </TransportGrid>
            </Transport>
          </BottomBar>
        </Main>
      </Body>
    </Page>
  );
}
